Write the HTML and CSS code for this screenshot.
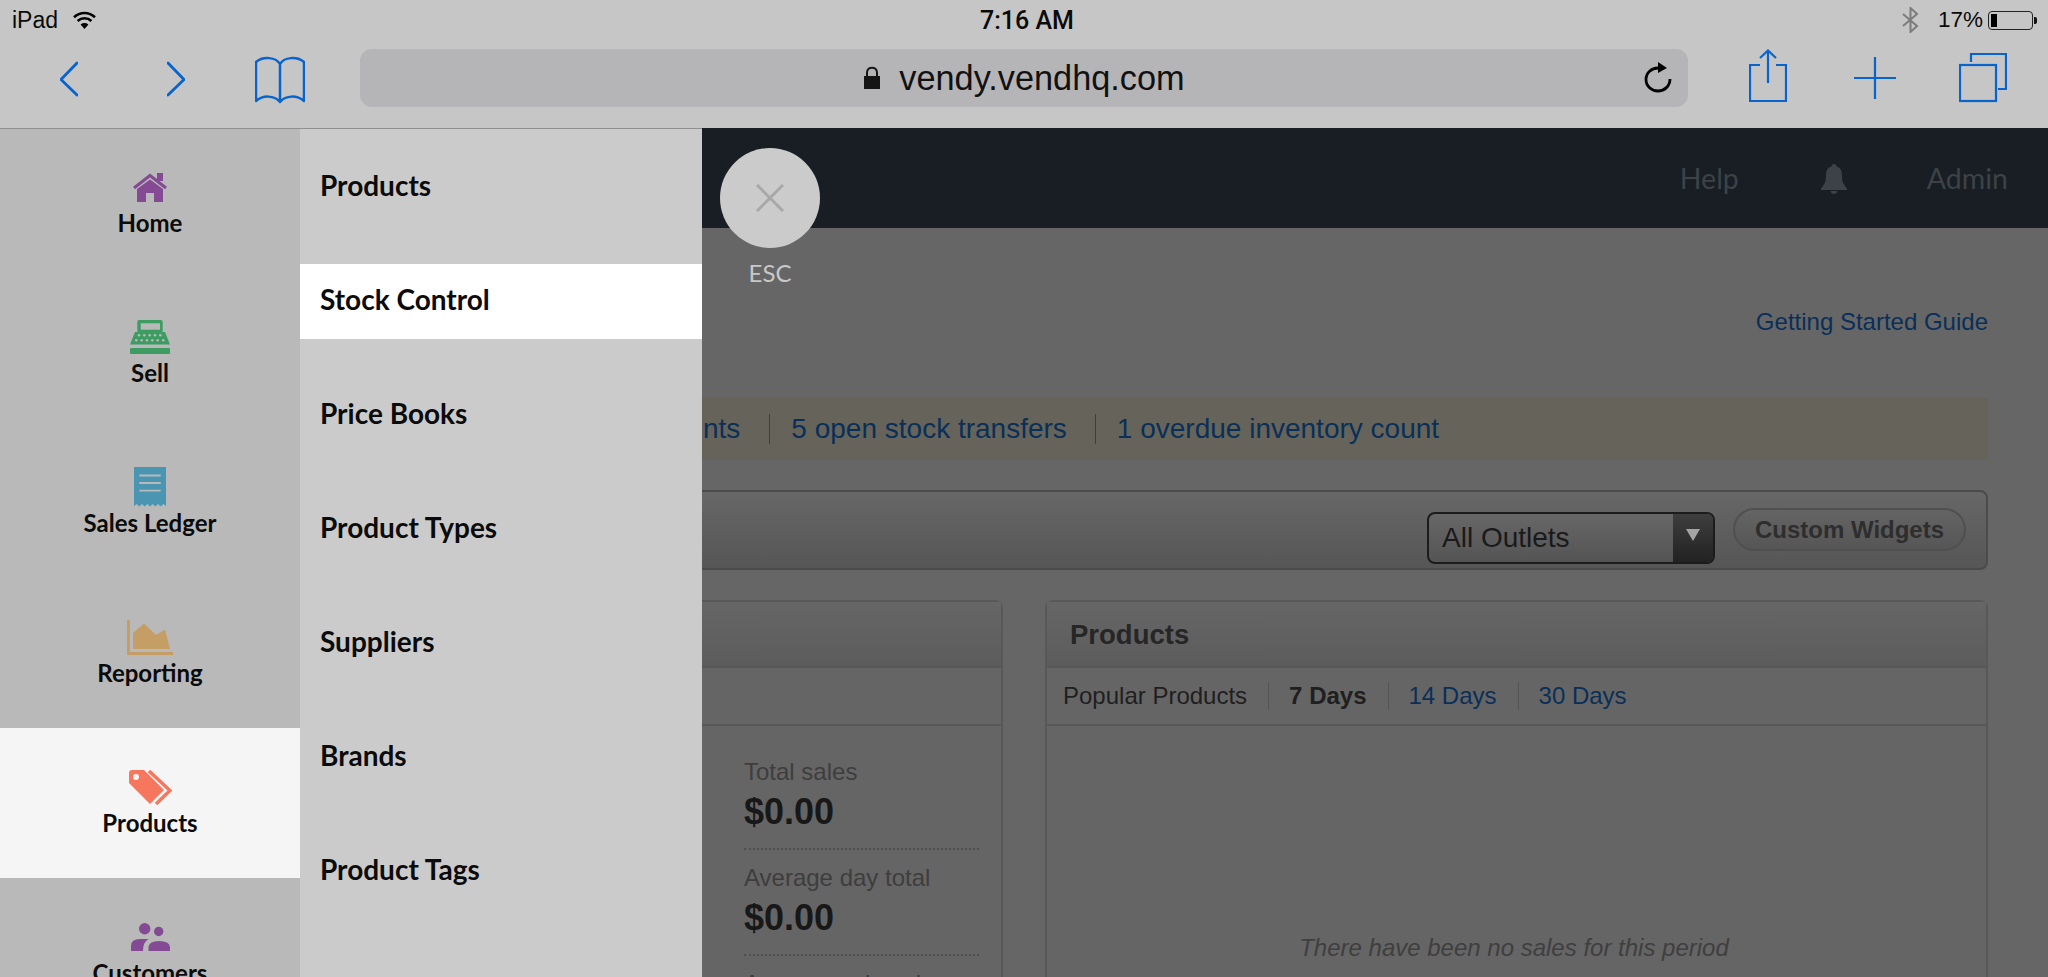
FILE: index.html
```html
<!DOCTYPE html>
<html lang="en">
<head>
    <meta charset="UTF-8">
    <meta name="viewport" content="width=device-width, initial-scale=1.0">
    <title>Vend - Products menu</title>
    <link rel="stylesheet" href="styles.css">
</head>
<body>

<!-- Safari chrome -->
<header class="chrome">
    <div class="status-bar">
        <div class="status-left">
            <span>iPad</span>
            <svg class="wifi" width="23" height="18" viewBox="0 0 23 18" fill="none" stroke="#000" stroke-width="2.6">
                <path d="M1 6.2C7 .6 16 .6 22 6.2"/>
                <path d="M4.6 10C8.6 6.4 14.4 6.4 18.4 10"/>
                <path d="M11.5 18L7.6 13.4C10 11.6 13 11.6 15.4 13.4Z" fill="#000" stroke="none"/>
            </svg>
        </div>
        <div class="status-time">7:16 AM</div>
        <div class="status-right">
            <svg width="17" height="26" viewBox="0 0 17 26" fill="none" stroke="#7c7c7c" stroke-width="2">
                <path d="M1 7L15 19L8.5 25V1L15 7L1 19"/>
            </svg>
            <span>17%</span>
            <div class="battery"><div class="battery-level"></div></div>
        </div>
    </div>
    <div class="toolbar">
        <svg class="tool tool-back" width="18" height="58" viewBox="0 0 18 58" fill="none">
            <path d="M17 14L1 30.500L17 46"/>
        </svg>
        <svg class="tool tool-forward" width="18" height="58" viewBox="0 0 18 58" fill="none">
            <path d="M1 14L17 30.500L1 46"/>
        </svg>
        <svg class="tool tool-book" width="50" height="58" viewBox="0 0 50 58" fill="none">
            <path d="M25 15C21 8 8 7 1 13V52C8 46 19 46 25 53C31 46 42 46 49 52V13C42 7 29 8 25 15V52"/>
        </svg>
        <div class="url-bar">
            <div></div>
            <div class="url-text">
                <svg width="18" height="24" viewBox="0 0 18 24">
                    <path d="M4 11V6.500C4 0 14 0 14 6.500V11" fill="none" stroke="#151515" stroke-width="2"/>
                    <rect x="1" y="10" width="16" height="13" fill="#151515"/>
                </svg>
                <span>vendy.vendhq.com</span>
            </div>
            <svg class="reload" width="28" height="32" viewBox="0 0 28 32">
                <path d="M14 7C7.500 7 2 12 2 18.500C2 25 7.500 30 14 30C20.500 30 26 25 26 18" fill="none" stroke="#000" stroke-width="2.800"/>
                <path d="M14 1L23 7L14 12Z" fill="#000"/>
            </svg>
        </div>
        <svg class="tool tool-share" width="38" height="58" viewBox="0 0 38 58" fill="none">
            <path d="M11 16H1V52H37V16H27"/>
            <path d="M19 34V2M11 9L19 1.500L27 9"/>
        </svg>
        <svg class="tool tool-plus" width="42" height="58" viewBox="0 0 42 58" fill="none">
            <path d="M0 29H42M21 8V50"/>
        </svg>
        <svg class="tool tool-tabs" width="48" height="58" viewBox="0 0 48 58" fill="none">
            <rect x="1" y="16" width="36" height="36"/>
            <path d="M12 13V5H47V40H39"/>
        </svg>
    </div>
</header>

<div class="layout">
    <!-- Left menu -->
    <nav class="sidebar">
        <a class="nav-item">
            <span class="nav-icon">
                <svg width="34" height="29" viewBox="0 0 34 29">
                    <g fill="#854a94">
                        <path d="M4 16L17 6.500L30 16V29H21V20H13V29H4Z"/>
                        <rect x="24" y="0" width="6" height="8"/>
                    </g>
                    <path d="M1 15L17 2.500L33 15" fill="none" stroke="#854a94" stroke-width="3"/>
                </svg>
            </span>
            <span>Home</span>
        </a>
        <a class="nav-item">
            <span class="nav-icon">
                <svg width="40" height="34" viewBox="0 0 40 34">
                    <g fill="#3d9c62">
                        <path d="M5 12H35L40 24.500H0Z"/>
                        <rect x="7.300" y="0" width="25.400" height="13" rx="2"/>
                        <rect x="0" y="28" width="40" height="6" rx="1"/>
                    </g>
                    <g fill="#b9b9b9">
                        <rect x="10.700" y="3.300" width="19.300" height="6.400"/>
                        <circle cx="9" cy="15.300" r="1.300"/>
                        <circle cx="14.300" cy="15.300" r="1.300"/>
                        <circle cx="19.700" cy="15.300" r="1.300"/>
                        <circle cx="25" cy="15.300" r="1.300"/>
                        <circle cx="30.300" cy="15.300" r="1.300"/>
                        <circle cx="6.300" cy="20.300" r="1.300"/>
                        <circle cx="11.700" cy="20.300" r="1.300"/>
                        <circle cx="17" cy="20.300" r="1.300"/>
                        <circle cx="22.300" cy="20.300" r="1.300"/>
                        <circle cx="27.700" cy="20.300" r="1.300"/>
                        <circle cx="33.300" cy="20.300" r="1.300"/>
                    </g>
                </svg>
            </span>
            <span>Sell</span>
        </a>
        <a class="nav-item">
            <span class="nav-icon">
                <svg width="32" height="40" viewBox="0 0 32 40">
                    <path d="M0 0H32V39L29.300 37L26.700 39.500L24 37L21.300 39.500L18.700 37L16 39.500L13.300 37L10.700 39.500L8 37L5.300 39.500L2.700 37L0 39Z" fill="#4a96b2"/>
                    <path d="M5.300 8.500H26.700M5.300 16H26.700M5.300 23.700H26.700" stroke="#b9b9b9" stroke-width="1.800"/>
                </svg>
            </span>
            <span>Sales Ledger</span>
        </a>
        <a class="nav-item">
            <span class="nav-icon">
                <svg width="46" height="35" viewBox="0 0 46 35" fill="#c49e64">
                    <path d="M0 0H3V32H46V35H0Z"/>
                    <path d="M6 29V13L17 3.500L29 15L38 9.500L43 29Z"/>
                </svg>
            </span>
            <span>Reporting</span>
        </a>
        <a class="nav-item nav-item-active">
            <span class="nav-icon">
                <svg width="43" height="35" viewBox="0 0 43 35">
                    <path d="M3 0H15L35 20L21 34L0 13V3Q0 0 3 0Z" fill="#f6775e"/>
                    <circle cx="7" cy="7" r="3" fill="#f5f5f5"/>
                    <path d="M20 1L41 20.500L27 34" fill="none" stroke="#f6775e" stroke-width="3.500"/>
                </svg>
            </span>
            <span>Products</span>
        </a>
        <a class="nav-item">
            <span class="nav-icon">
                <svg width="39" height="28" viewBox="0 0 39 28" fill="#854a94">
                    <circle cx="13.700" cy="5.700" r="5.700"/>
                    <circle cx="27.700" cy="8.500" r="4.700"/>
                    <path d="M0 28V23Q0 16 9 16H17.500Q12 19 12 28Z"/>
                    <path d="M17.500 28V24Q18 18 28 18Q38.500 18 39 24V28Z"/>
                </svg>
            </span>
            <span>Customers</span>
        </a>
    </nav>

    <ul class="submenu">
        <li class="submenu-item">Products</li>
        <li class="submenu-item submenu-item-active">Stock Control</li>
        <li class="submenu-item">Price Books</li>
        <li class="submenu-item">Product Types</li>
        <li class="submenu-item">Suppliers</li>
        <li class="submenu-item">Brands</li>
        <li class="submenu-item">Product Tags</li>
    </ul>

    <!-- Dimmed page behind the menu -->
    <main class="page">
        <div class="close-btn">
            <div class="close-circle">
                <svg width="28" height="28" viewBox="0 0 28 28" fill="none" stroke="#a8a8a8" stroke-width="3">
                    <path d="M1 1L27 27M27 1L1 27"/>
                </svg>
            </div>
            <span class="close-label">ESC</span>
        </div>

        <div class="page-header">
            <span>Help</span>
            <svg class="bell" width="26" height="30" viewBox="0 0 26 30" fill="#3c4247">
                <path d="M13 0C14.500 0 15.500 1 15.500 2.500C20 3.500 21 7.500 21 12C21 18 23 21 26 24.500V26H0V24.500C3 21 5 18 5 12C5 7.500 6 3.500 10.500 2.500C10.500 1 11.500 0 13 0Z"/>
                <path d="M9.500 27H16.500C16 31 10 31 9.500 27Z"/>
            </svg>
            <span>Admin</span>
        </div>

        <div class="page-body">
            <div class="guide-row"><a class="link">Getting Started Guide</a></div>

            <div class="notice">
                <a class="link notice-link">nts</a>
                <a class="link notice-link">5 open stock transfers</a>
                <a class="link notice-link">1 overdue inventory count</a>
            </div>

            <div class="filter-bar">
                <div class="select">
                    <span class="select-value">All Outlets</span>
                    <span class="select-arrow"></span>
                </div>
                <div class="btn-widgets">Custom Widgets</div>
            </div>

            <div class="panels">
                <section class="panel panel-sales">
                    <div class="panel-head"></div>
                    <div class="panel-tabs"></div>
                    <div class="stats">
                        <div class="stat">
                            <div class="stat-label">Total sales</div>
                            <div class="stat-value">$0.00</div>
                        </div>
                        <div class="stat">
                            <div class="stat-label">Average day total</div>
                            <div class="stat-value">$0.00</div>
                        </div>
                        <div class="stat">
                            <div class="stat-label">Average sale value</div>
                        </div>
                    </div>
                </section>

                <section class="panel panel-products">
                    <div class="panel-head">Products</div>
                    <div class="panel-tabs">
                        <span class="tab">Popular Products</span>
                        <span class="tab tab-current">7 Days</span>
                        <a class="tab link">14 Days</a>
                        <a class="tab link">30 Days</a>
                    </div>
                    <p class="empty-note">There have been no sales for this period</p>
                </section>
            </div>
        </div>
    </main>
</div>

</body>
</html>
```

FILE: styles.css
```css
* { box-sizing: border-box; }
html, body { margin: 0; padding: 0; height: 977px; overflow: hidden; }
body { width: 2048px; font-family: "Liberation Sans", Arial, sans-serif; background-color: #666; }

/* browser chrome */
.chrome { height: 128px; background-color: #c6c6c6; color: #0a0a0a; }
.status-bar { height: 40px; padding: 0 11px 0 12px; display: grid; grid-template-columns: 1fr auto 1fr; align-items: center; font-size: 23px; }
.status-left { display: flex; align-items: center; gap: 15px; }
.status-time { font-family: Roboto, sans-serif; font-weight: 500; font-size: 25px; padding-left: 5px; }
.status-right { display: flex; align-items: center; justify-content: flex-end; gap: 12px; font-size: 22.500px; }
.status-right span { margin-left: 7px; margin-right: -12px; }
.battery { position: relative; width: 45px; height: 19px; margin-left: 5px; margin-right: 4px; border: 1px solid #222; border-radius: 4px; padding: 2px; }
.battery::after { content: ""; position: absolute; right: -5px; top: 5px; width: 3px; height: 7px; background: #111; border-radius: 0 2px 2px 0; }
.battery-level { width: 6px; height: 100%; background: #000; }

.toolbar { height: 88px; padding: 9px 0 0 60px; display: flex; align-items: flex-start; }
.tool { stroke: #0864cc; stroke-width: 2.200px; flex: none; }
.tool-back, .tool-forward { stroke-width: 2.800px; stroke-linecap: round; stroke-linejoin: round; }
.tool-forward { margin-left: 89px; }
.tool-book { margin-left: 70px; stroke-width: 2.500px; stroke-linejoin: round; }
.tool-share { margin-left: 61px; }
.tool-plus { margin-left: 67px; }
.tool-tabs { margin-left: 63px; }
.url-bar { width: 1328px; height: 58px; margin-left: 55px; background-color: #b5b5b7; border-radius: 12px; display: grid; grid-template-columns: 1fr auto 1fr; align-items: center; }
.url-text { display: flex; align-items: center; gap: 18px; font-size: 34.300px; color: #111; }
.reload { justify-self: end; margin-right: 16px; margin-top: -2px; }

.layout { display: flex; height: 849px; overflow: hidden; }

/* left menu */
.sidebar { width: 300px; flex: none; background-color: #b9b9b9; border-top: 1px solid #8f8f8f; font-family: Lato, sans-serif; font-weight: 700; font-size: 24px; color: #0b0b0b; }
.nav-item { display: flex; flex-direction: column; align-items: center; height: 150px; padding-top: 39px; line-height: 30px; }
.nav-item:first-child { margin-top: -1px; }
.nav-item-active { background-color: #f5f5f5; }
.nav-icon { height: 40px; margin-bottom: 1px; display: flex; align-items: center; justify-content: center; }

.submenu { width: 402px; flex: none; margin: 0; padding: 21px 0 0; list-style: none; background-color: #cbcbcb; border-top: 1px solid #8f8f8f; font-family: Lato, sans-serif; font-weight: 700; font-size: 28px; color: #0b0b0b; }
.submenu-item { height: 75px; margin-bottom: 39px; padding-left: 20px; line-height: 70px; }
.submenu-item-active { background-color: #fff; }

/* dimmed page */
.page { position: relative; flex: 1; min-width: 0; }
.close-btn { position: absolute; left: 18px; top: 20px; width: 100px; display: flex; flex-direction: column; align-items: center; gap: 12px; }
.close-circle { width: 100px; height: 100px; border-radius: 50%; background-color: #cbcbcb; display: flex; align-items: center; justify-content: center; }
.close-label { font-family: Lato, sans-serif; font-size: 24px; line-height: 26px; color: #c8c8c8; }

.page-header { height: 100px; padding-right: 40px; background-color: #181e23; display: flex; align-items: center; justify-content: flex-end; font-family: Lato, sans-serif; font-size: 28.500px; color: #3c4247; }
.bell { margin-left: 82px; margin-right: 80px; margin-top: 2px; }
.page-body { padding-right: 60px; }
.link { color: #0a2f58; }
.guide-row { padding-top: 79px; height: 108px; line-height: 30px; font-size: 24px; text-align: right; }

.notice { height: 62px; margin-top: 62px; background-color: #66645a; display: flex; align-items: center; padding-left: 1px; font-size: 28px; }
.notice-link { padding: 0 28px 0 21px; border-left: 1px solid #3f3f3c; line-height: 30px; }
.notice-link:first-child { padding: 0 29px 0 0; border-left: 0; }

.filter-bar { height: 80px; margin-top: 30px; border: 2px solid #4b4b4b; border-left: 0; border-radius: 0 8px 8px 0; background: linear-gradient(#676767, #565656); display: flex; justify-content: flex-end; align-items: flex-start; padding-right: 20px; }
.select { width: 288px; height: 52px; margin-top: 20px; margin-right: -2px; border: 2px solid #1c1c1c; border-radius: 8px; background: linear-gradient(#676767, #545454); display: flex; overflow: hidden; }
.select-value { flex: 1; padding-left: 13px; font-size: 28px; line-height: 47px; color: #1a1a1a; }
.select-arrow { position: relative; width: 40px; background: linear-gradient(#3e3e3e, #222); }
.select-arrow::after { content: ""; position: absolute; left: 13px; top: 15px; border-style: solid; border-width: 12px 7px 0; border-color: #a4a4a4 transparent transparent; }
.btn-widgets { width: 233px; height: 43px; margin-top: 16px; margin-left: 20px; border: 2px solid #505050; border-radius: 22px; background: linear-gradient(#646464, #565656); font-weight: 700; font-size: 24px; line-height: 40px; text-align: center; color: #2e2e2e; }

.panels { margin-top: 30px; display: grid; grid-template-columns: 301px 943px; gap: 42px; align-items: start; }
.panel { height: 420px; border: 2px solid #585858; border-radius: 8px 8px 0 0; background-color: #656565; }
.panel-sales { border-left: 0; border-top-left-radius: 0; }
.panel-head { height: 66px; padding-left: 23px; border-bottom: 2px solid #585858; background: linear-gradient(#666, #5c5c5c); font-weight: 700; font-size: 27.500px; line-height: 65px; color: #262626; }
.panel-tabs { height: 58px; padding-left: 16px; border-bottom: 2px solid #585858; display: flex; align-items: center; font-size: 24px; color: #1f1f1f; }
.tab { padding: 0 21px 0 20px; border-left: 1px solid #555; line-height: 28px; }
.tab:first-child { padding-left: 0; border-left: 0; }
.tab-current { font-weight: 700; }

.stats { padding: 32px 22px 0 42px; }
.stat { padding-bottom: 15px; margin-bottom: 14px; border-bottom: 2px dotted #4f4f4f; }
.stat-label { font-size: 24px; line-height: 28px; color: #3e3e3e; }
.stat-value { margin-top: 5px; font-weight: 700; font-size: 36px; line-height: 42px; color: #181818; }

.empty-note { margin: 208px 0 0; padding-right: 5px; text-align: center; font-style: italic; font-size: 24px; line-height: 28px; color: #3f3f3f; }
```
